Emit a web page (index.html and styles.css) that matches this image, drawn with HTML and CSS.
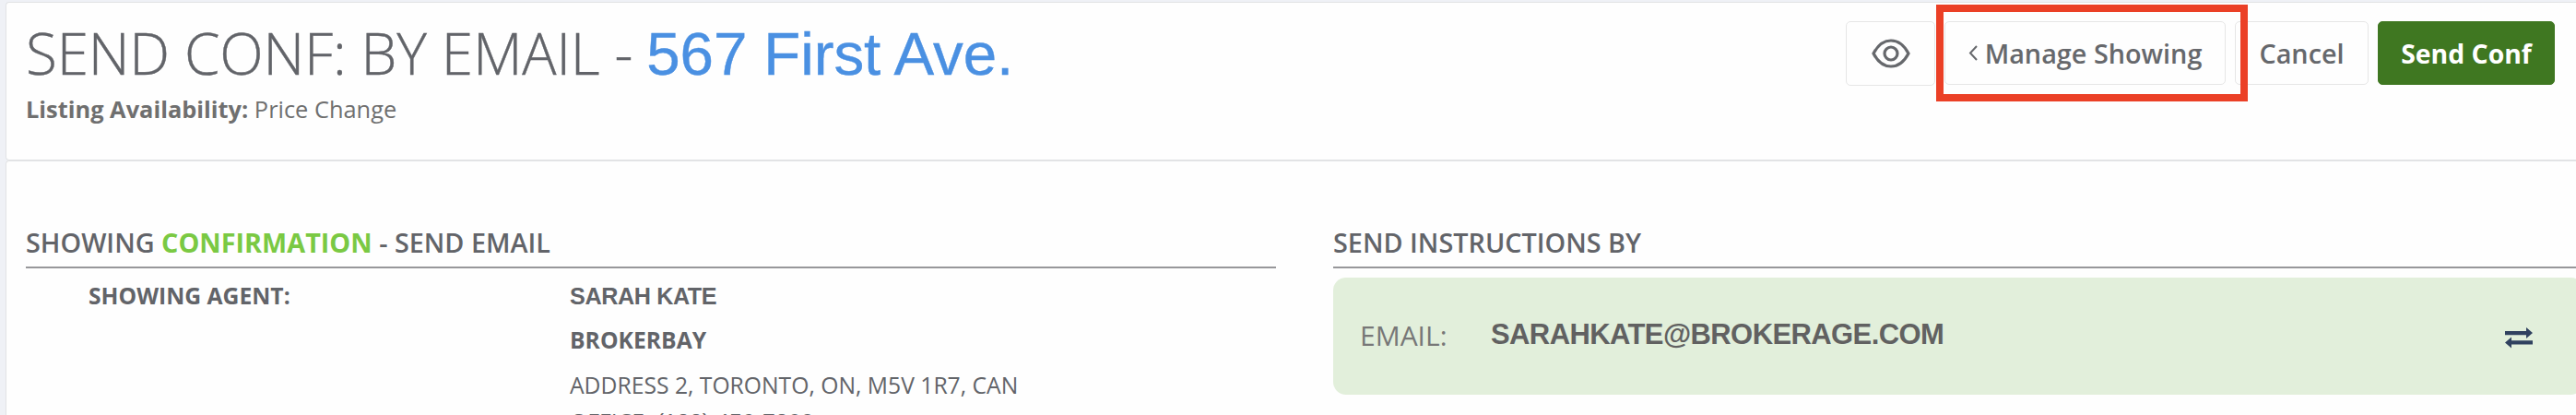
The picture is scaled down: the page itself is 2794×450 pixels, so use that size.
FILE: index.html
```html
<!DOCTYPE html>
<html>
<head>
    <meta charset="utf-8">
    <title>Send Conf: By Email</title>
    <link rel="stylesheet" href="styles.css">
</head>
<body>
    <header class="header card">
        <div class="heading">
            <h1>SEND CONF: BY EMAIL - <a class="address">567 First Ave.</a></h1>
            <p class="availability"><strong>Listing Availability:</strong> Price Change</p>
        </div>
        <div class="actions">
            <button class="btn btn-eye">
                <svg width="42" height="34" viewBox="0 0 42 34" fill="none" stroke="#66686c" stroke-width="3.2">
                    <path d="M2 17C7 7.500 13.500 3 21 3S35 7.500 40 17C35 26.500 28.500 31 21 31S7 26.500 2 17Z"/>
                    <circle cx="21" cy="17" r="7"/>
                </svg>
            </button>
            <button class="btn btn-manage">
                <svg width="10" height="17" viewBox="0 0 10 17" fill="none" stroke="#66686c" stroke-width="2">
                    <path d="M9 1L2 8.500L9 16"/>
                </svg>
                Manage Showing
            </button>
            <button class="btn btn-cancel">Cancel</button>
            <button class="btn btn-send">Send Conf</button>
            <div class="highlight"></div>
        </div>
    </header>

    <main class="content card">
        <section class="details">
            <h2>SHOWING <b>CONFIRMATION</b> - SEND EMAIL</h2>
            <div class="agent">
                <strong class="label">SHOWING AGENT:</strong>
                <div class="info">
                    <p class="name">SARAH KATE</p>
                    <p class="brokerage">BROKERBAY</p>
                    <p class="line">ADDRESS 2, TORONTO, ON, M5V 1R7, CAN</p>
                    <p class="line">OFFICE: <span class="phone">(123) 456-7890</span></p>
                </div>
            </div>
        </section>
        <section class="send">
            <h2>SEND INSTRUCTIONS BY</h2>
            <div class="email-box">
                <span class="email-label">EMAIL:</span>
                <span class="email">SARAHKATE@BROKERAGE.COM</span>
                <svg class="swap" width="30" height="23" viewBox="0 0 30 23" fill="#30415f">
                    <path d="M0 4H23V0L30 6L23 12V8.200H0Z"/>
                    <path d="M30 14.300H7V10.500L0 16.500L7 22.500V18.500H30Z"/>
                </svg>
            </div>
        </section>
    </main>
</body>
</html>
```

FILE: styles.css
```css
* {
    margin: 0;
    padding: 0;
    box-sizing: border-box;
}

body {
    height: 100vh;
    overflow: hidden;
    padding: 2px 0 0 6px;
    background: #eff1f6;
    color: #626469;
    font-family: "Open Sans", sans-serif;
}

.card {
    background: #fefefe;
    border: 1px solid #e2e3e5;
    border-right: none;
    border-radius: 4px 0 0 4px;
}

.header {
    display: flex;
    justify-content: space-between;
    height: 172px;
    padding: 20px 23px 0 21px;
}

.heading {
    padding-top: 2px;
}

h1 {
    font-size: 62px;
    font-weight: 300;
    line-height: 64px;
    letter-spacing: -0.15px;
    white-space: nowrap;
    -webkit-text-stroke: 0.4px #626469;
}

.address {
    margin-left: -1px;
    color: #4a90e2;
    font-family: "Liberation Sans", Arial, sans-serif;
    font-size: 65.5px;
    font-weight: 400;
    line-height: 0;
    letter-spacing: -0.1px;
    -webkit-text-stroke: 0.4px #4a90e2;
}

.availability {
    margin-top: 12px;
    color: #6f6f6f;
    font-size: 25.4px;
    line-height: 34px;
}

.actions {
    position: relative;
    display: flex;
    align-items: flex-start;
    gap: 10px;
}

.btn {
    display: flex;
    align-items: center;
    justify-content: center;
    height: 69px;
    border: 1px solid #e6e6e6;
    border-radius: 5px;
    background: #fefefe;
    color: #66686c;
    font-family: inherit;
    font-size: 28.8px;
    font-weight: 600;
    white-space: nowrap;
}

.btn-eye {
    width: 97px;
    height: 70px;
}

.btn-manage {
    width: 305px;
    gap: 8px;
}

.btn-cancel {
    width: 145px;
}

.btn-send {
    width: 192px;
    border-color: #3f7721;
    background: #3f7721;
    color: #fff;
    font-size: 28.4px;
    font-weight: 700;
}

/* red frame around the manage button */
.highlight {
    position: absolute;
    top: -18px;
    left: 98px;
    width: 338px;
    height: 105px;
    border: 8px solid #eb4026;
}

.content {
    display: flex;
    gap: 62px;
    height: 276px;
    overflow: hidden;
    padding: 68px 0 0 21px;
    border-bottom: none;
    border-radius: 4px 0 0 0;
}

.details,
.send {
    width: 1356px;
    flex-shrink: 0;
}

h2 {
    height: 48px;
    border-bottom: 2px solid #97979a;
    font-size: 28.8px;
    font-weight: 600;
    line-height: 40px;
    white-space: nowrap;
}

h2 b {
    color: #7ac943;
    font-weight: 700;
}

.agent {
    display: flex;
    padding: 6px 0 0 68px;
    font-size: 24.7px;
    line-height: 48px;
    white-space: nowrap;
}

.label {
    width: 522px;
}

.name {
    font-family: "Liberation Sans", Arial, sans-serif;
    font-size: 25.2px;
    font-weight: 700;
    letter-spacing: -0.4px;
}

.brokerage {
    font-weight: 700;
}

.line {
    line-height: 40px;
}

.brokerage + .line {
    margin-top: 5px;
}

.phone {
    font-family: "Liberation Sans", Arial, sans-serif;
    font-size: 25px;
    line-height: 0;
}

.email-box {
    display: flex;
    align-items: center;
    height: 127px;
    margin-top: 10px;
    padding: 0 55px 2px 29px;
    border-radius: 14px;
    background: #e2efdb;
}

.email-label {
    width: 142px;
    color: #777;
    font-size: 30px;
}

.email {
    margin-bottom: 2px;
    color: #616161;
    font-family: "Liberation Sans", Arial, sans-serif;
    font-size: 31px;
    font-weight: 700;
    letter-spacing: -0.6px;
}

.swap {
    margin: 6px 0 0 auto;
}
```
